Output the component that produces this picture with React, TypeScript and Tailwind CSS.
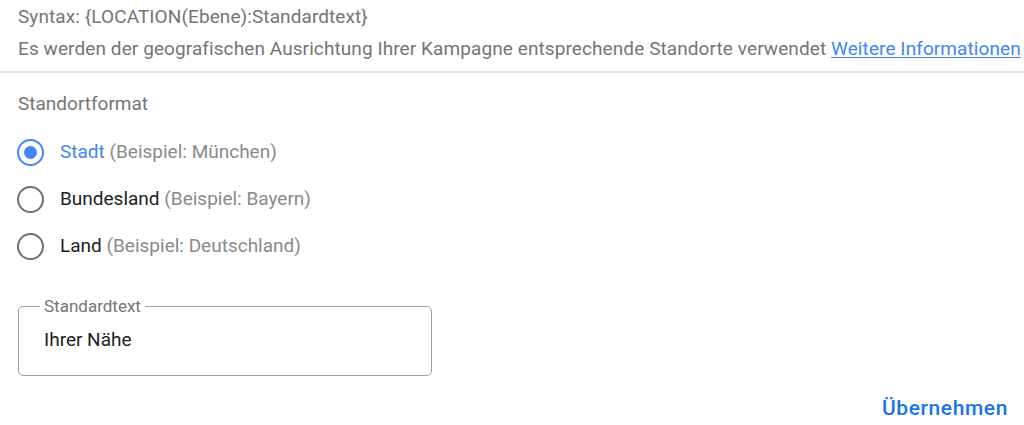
import { useState } from 'react';

const options = [
  { id: 'stadt', label: 'Stadt', example: '(Beispiel: München)' },
  { id: 'bundesland', label: 'Bundesland', example: '(Beispiel: Bayern)' },
  { id: 'land', label: 'Land', example: '(Beispiel: Deutschland)' },
];

function Radio({ checked }: { checked: boolean }) {
  return (
    <span
      className={`flex h-[27px] w-[27px] shrink-0 items-center justify-center rounded-full border-[2.5px] ${
        checked ? 'border-[#4285f4]' : 'border-[#6f6f6f]'
      }`}
    >
      {checked && <span className="h-[13px] w-[13px] rounded-full bg-[#4285f4]" />}
    </span>
  );
}

export default function App() {
  const [selected, setSelected] = useState('stadt');
  return (
    <div className="h-[425px] w-[1024px] overflow-hidden bg-white font-['Roboto',sans-serif]">
      <div className="px-[18px] pt-px text-[19px] leading-[32px] tracking-[0.09px] text-[#757575]">
        <p>Syntax: {'{LOCATION(Ebene):Standardtext}'}</p>
        <p className="whitespace-nowrap">
          Es werden der geografischen Ausrichtung Ihrer Kampagne entsprechende Standorte verwendet{' '}
          <a href="#" className="text-[#4285f4] underline underline-offset-2">
            Weitere Informationen
          </a>
        </p>
      </div>
      <div className="mt-[6px] h-[2px] bg-[#e3e5e6]" />

      <div className="px-[18px]">
        <p className="mt-[20px] text-[19px] leading-[22px] text-[#757575]">Standortformat</p>

        <div className="mt-[24px] flex flex-col gap-[20px]">
          {options.map((o) => (
            <button
              key={o.id}
              onClick={() => setSelected(o.id)}
              className="-ml-px flex h-[27px] items-center gap-[16px] text-left text-[19px]"
            >
              <Radio checked={selected === o.id} />
              <span>
                <span className={selected === o.id ? 'text-[#4285f4]' : 'text-[#202124]'}>
                  {o.label}
                </span>{' '}
                <span className="text-[#8a8a8a]">{o.example}</span>
              </span>
            </button>
          ))}
        </div>

        <fieldset className="mt-[38px] h-[78px] w-[414px] rounded-[5px] border border-[#a0a0a0] px-[21px]">
          <legend className="px-[4px] text-[17px] leading-[17px] text-[#757575]">Standardtext</legend>
          <p className="mt-[14px] ml-[4px] text-[19px] leading-[22px] text-[#202124]">Ihrer Nähe</p>
        </fieldset>
      </div>

      <div className="mt-[20px] flex justify-end pr-[16px]">
        <button className="text-[21px] leading-[24px] font-medium tracking-[0.6px] text-[#1a73e8]">
          Übernehmen
        </button>
      </div>
    </div>
  );
}
